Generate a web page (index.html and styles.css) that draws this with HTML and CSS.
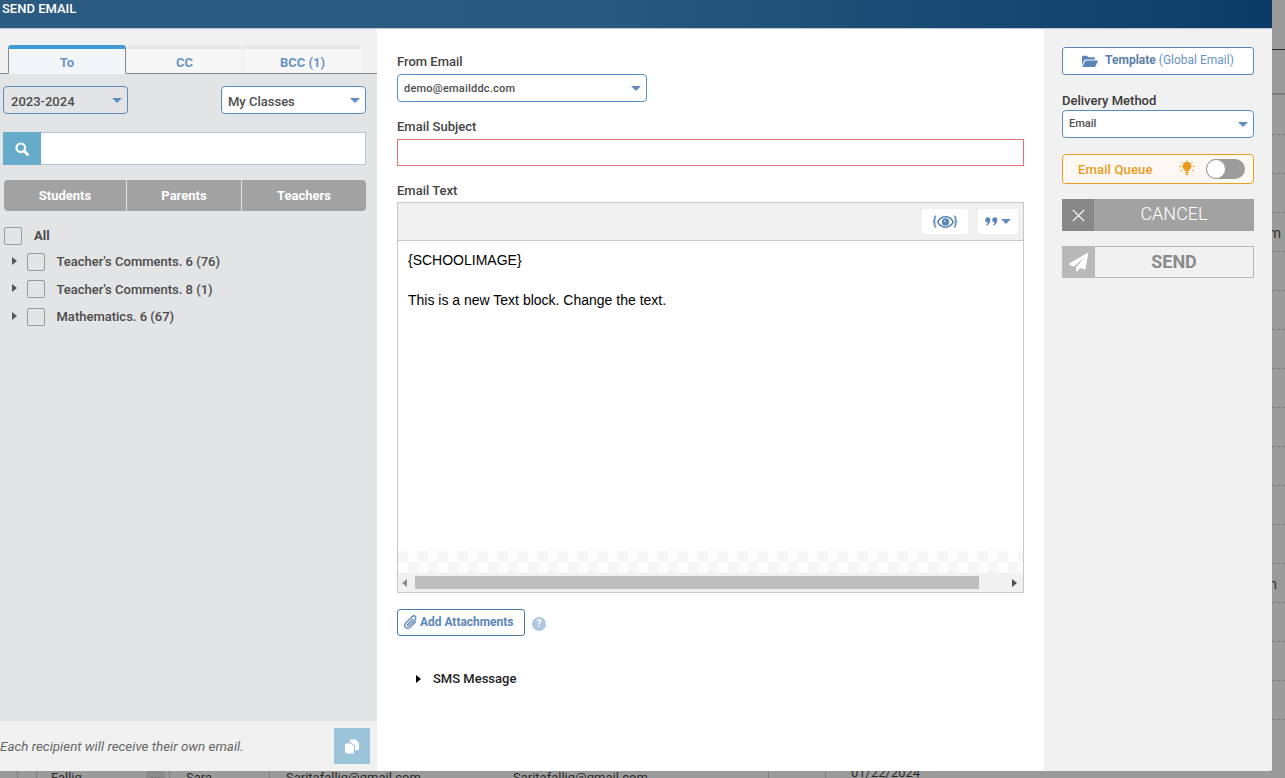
FILE: index.html
```html
<!DOCTYPE html>
<html lang="en">
<head>
<meta charset="utf-8">
<title>Send Email</title>
<link rel="stylesheet" href="styles.css">
</head>
<body>
<div class="backdrop">
  <div class="line-dark"></div>
  <div class="line-thick"></div>
  <div class="dash-list">
    <div class="dash"></div><div class="dash"></div><div class="dash dash-m"></div><div class="dash"></div><div class="dash"></div><div class="dash"></div><div class="dash"></div><div class="dash"></div><div class="dash"></div><div class="dash"></div><div class="dash"></div><div class="dash dash-n"></div><div class="dash"></div><div class="dash"></div><div class="dash"></div><div class="dash"></div>
  </div>
  <div class="back-row">
    <i class="vl vl1"></i><i class="vl vl2"></i><i class="vl vl3"></i><i class="vl vl4"></i><i class="vl vl5"></i><i class="vl vl6"></i>
    <span class="c1">Fallig</span><span class="dots">•••</span><span class="c2">Sara</span><span class="c3">Saritafallig@gmail.com</span><span class="c4">Saritafallig@gmail.com</span><span class="c5">01/22/2024</span>
  </div>
</div>
<div class="modal">
  <header class="modal-head">SEND EMAIL</header>
  <div class="modal-body">
    <aside class="left">
      <div class="tabs">
        <div class="tab tab-active">To</div>
        <div class="tab tab-cc">CC</div>
        <div class="tab tab-bcc">BCC (1)</div>
      </div>
      <div class="filters">
        <div class="select select-year">2023-2024<i class="caret"></i></div>
        <div class="select select-class">My Classes<i class="caret"></i></div>
      </div>
      <div class="search">
        <div class="search-icon"><svg width="14" height="14" viewBox="0 0 14 14"><circle cx="5.8" cy="5.8" r="4.3" fill="none" stroke="#fff" stroke-width="2.2"/><path d="M9 9l3.600 3.600" stroke="#fff" stroke-width="2.800" stroke-linecap="round"/></svg></div>
        <div class="search-field"></div>
      </div>
      <div class="seg">
        <div class="seg-btn seg-a">Students</div>
        <div class="seg-btn seg-b">Parents</div>
        <div class="seg-btn seg-c">Teachers</div>
      </div>
      <div class="tree">
        <div class="tree-all"><i class="check"></i><span class="all-label">All</span></div>
        <div class="tree-row row-1"><i class="arrow"></i><i class="check"></i><span class="row-label">Teacher's Comments. 6 (76)</span></div>
        <div class="tree-row row-2"><i class="arrow"></i><i class="check"></i><span class="row-label">Teacher's Comments. 8 (1)</span></div>
        <div class="tree-row row-3"><i class="arrow"></i><i class="check"></i><span class="row-label">Mathematics. 6 (67)</span></div>
      </div>
      <div class="left-foot">
        <span class="foot-text">Each recipient will receive their own email.</span>
        <div class="foot-btn"><svg width="16" height="15" viewBox="0 0 16 15"><path d="M7 .5h4.500l3.500 3.200V10a1.200 1.200 0 0 1-1.200 1.200H11V6.800L7.200 3.500H5.800V1.700A1.200 1.200 0 0 1 7 .5z" fill="#fff"/><path d="M2.500 4.500H7l3 2.800v6a1.200 1.200 0 0 1-1.200 1.200H3.500A2.500 2.500 0 0 1 1 12V6a1.500 1.500 0 0 1 1.500-1.500z" fill="#fff"/></svg></div>
      </div>
    </aside>
    <main class="center">
      <label class="label label-from">From Email</label>
      <div class="select select-from">demo@emailddc.com<i class="caret"></i></div>
      <label class="label label-subject">Email Subject</label>
      <div class="subject"></div>
      <label class="label label-text">Email Text</label>
      <div class="editor">
        <div class="toolbar">
          <div class="tool tool-eye"><span class="brace">{</span><svg width="17" height="12" viewBox="0 0 17 12"><path d="M.6 6C2.600 2.500 5.300.8 8.500.8s5.900 1.700 7.900 5.200c-2 3.500-4.700 5.200-7.900 5.200S2.600 9.500.6 6z" fill="none" stroke="#5b86b8" stroke-width="1.600"/><circle cx="8.500" cy="6" r="3.700" fill="#5b86b8"/><circle cx="7.700" cy="5.200" r=".9" fill="#cddcec"/></svg><span class="brace">}</span></div>
          <div class="tool tool-quote"><svg width="13" height="9" viewBox="0 0 13 9"><path d="M2.800.3a2.500 2.500 0 0 1 2.500 2.500c0 2.800-1.500 5-3.800 5.900L.9 7.800c1-.6 1.600-1.300 1.800-2.400A2.500 2.500 0 0 1 2.800.3zM9.800.3a2.500 2.500 0 0 1 2.500 2.500c0 2.800-1.500 5-3.800 5.900l-.6-.9c1-.6 1.600-1.300 1.800-2.400A2.500 2.500 0 0 1 9.800.3z" fill="#5b86b8"/></svg><i class="caret caret-small"></i></div>
        </div>
        <div class="editor-text">
          <p class="para">{SCHOOLIMAGE}</p>
          <p class="para">&nbsp;</p>
          <p class="para">This is a new Text block. Change the text.</p>
        </div>
        <div class="checker"></div>
        <div class="scrollbar">
          <i class="sb-left"></i>
          <div class="sb-thumb"></div>
          <i class="sb-right"></i>
        </div>
      </div>
      <div class="attach-row">
        <div class="attach"><svg width="13" height="15" viewBox="0 0 13 15"><path d="M11.500 6.800l-5 5.300c-1.500 1.500-3.700 1.600-4.900.4s-1.100-3.300.4-4.800L8 1.700c1-1 2.500-1.100 3.300-.3s.7 2.300-.3 3.300L5.300 10.600c-.5.500-1.200.6-1.600.2s-.3-1.100.2-1.600l4.800-5" fill="none" stroke="#5b86b8" stroke-width="1.300" stroke-linecap="round"/></svg><span class="attach-text">Add Attachments</span></div>
        <div class="help">?</div>
      </div>
      <div class="sms"><i class="arrow arrow-black"></i>SMS Message</div>
    </main>
    <aside class="right">
      <div class="template"><svg width="16" height="13" viewBox="0 0 16 13"><path d="M0 2a1.200 1.200 0 0 1 1.200-1.200h3.600l1.500 1.500h5.500A1.200 1.200 0 0 1 13 3.500V4.500H4a2 2 0 0 0-1.800 1.100L0 10z" fill="#5b86b8"/><path d="M4.200 5.500H15.300a.6.6 0 0 1 .5.900L13.300 11.400a1.200 1.200 0 0 1-1.100.7H1a.6.600 0 0 1-.5-.9L3.100 6.200a1.200 1.200 0 0 1 1.100-.7z" fill="#5b86b8"/></svg><b class="tpl-b">Template</b><span class="tpl-s">(Global Email)</span></div>
      <div class="delivery-label">Delivery Method</div>
      <div class="select select-delivery">Email<i class="caret"></i></div>
      <div class="queue">
        <span class="queue-label">Email Queue</span>
        <svg class="bulb" width="16" height="16" viewBox="0 0 16 16"><path d="M8 1.800a4.400 4.400 0 0 0-2.800 7.800c.5.500.8 1 .9 1.600h3.800c.1-.6.400-1.100.9-1.600A4.400 4.400 0 0 0 8 1.800z" fill="#eb9a1a"/><path d="M6.200 12h3.600v1.200H6.200zM6.700 13.800h2.600V15H6.700z" fill="#eb9a1a"/><path d="M8 0v1.200M2.500 1.800l1.200 1.200M13.500 1.800L12.300 3M.2 6.500H2.200M13.800 6.500h2M1.500 11l1.800-1M14.500 11l-1.800-1" stroke="#eb9a1a" stroke-width="1"/></svg>
        <div class="toggle"><i class="knob"></i></div>
      </div>
      <div class="cancel">
        <div class="cancel-x"><svg width="13" height="13" viewBox="0 0 13 13"><path d="M.8.800l11.400 11.400M12.200.8L.8 12.200" stroke="#fff" stroke-width="1.200"/></svg></div>
        <div class="cancel-text">CANCEL</div>
      </div>
      <div class="send">
        <div class="send-icon"><svg width="20" height="20" viewBox="0 0 20 20"><path d="M19.500.3L.6 11.200c-.7.4-.6 1.400.1 1.700l4.300 1.800L16 4.500 7 15.600v3.100c0 .8 1 1.100 1.500.5l2.700-3.200 3.900 1.600c.6.300 1.300-.1 1.400-.8z" fill="#fff"/></svg></div>
        <div class="send-text">SEND</div>
      </div>
    </aside>
  </div>
</div>
</body>
</html>
```
FILE: styles.css
```css
* { box-sizing: border-box; }
html, body { margin: 0; height: 100%; overflow: hidden; }
body { font-family: Roboto, "Liberation Sans", sans-serif; color: #444; background: #9a9a9a; width: 1285px; height: 778px; position: relative; }
i { display: block; font-style: normal; }

/* page behind the dialog */
.backdrop { width: 1285px; height: 778px; background: #9a9a9a; position: relative; overflow: hidden; }
.line-dark { position: absolute; top: 49px; left: 0; right: 0; height: 1px; background: #2f2f2f; }
.line-thick { position: absolute; top: 93px; left: 0; right: 0; height: 2px; background: #7e7e7e; }
.dash-list { position: absolute; top: 134px; left: 0; right: 0; }
.dash { height: 39px; border-top: 1px dashed #7c7c7c; position: relative; }
.dash-m::after { content: "m"; position: absolute; right: 4px; top: 12px; color: #333; font-size: 14px; }
.dash-n::after { content: "n"; position: absolute; right: 8px; top: 12px; color: #333; font-size: 14px; }
.back-row { position: absolute; left: 0; top: 771px; height: 7px; width: 1285px; font-size: 13px; color: #2b2b2b; line-height: 14px; overflow: hidden; }
.back-row span { position: absolute; top: 0; }
.vl { position: absolute; top: 0; height: 7px; width: 1px; background: #7c7c7c; }
.vl1 { left: 17px; } .vl2 { left: 36px; } .vl3 { left: 169px; } .vl4 { left: 269px; } .vl5 { left: 768px; } .vl6 { left: 825px; }
.c1 { left: 51px; } .dots { left: 146px; width: 19px; background: #8a8a8a; color: #666; font-size: 9px; text-align: center; border-radius: 3px 3px 0 0; }
.c2 { left: 186px; } .c3 { left: 286px; } .c4 { left: 513px; } .back-row .c5 { left: 851px; top: -5px; }

/* dialog */
.modal { position: absolute; left: 0; top: 0; width: 1272px; height: 771px; display: flex; flex-direction: column; background: #fff; border-bottom-right-radius: 3px; overflow: hidden; }
.modal-head { height: 29px; flex: none; padding: 1px 0 0 2px; font-size: 13px; font-weight: 500; line-height: 15px; color: #fff; background: linear-gradient(90deg, #2c5b81 0%, #2a5a80 45%, #0c3b67 100%); border-bottom: 1px solid #b9c9da; }
.modal-body { flex: 1; display: flex; min-height: 0; }

/* left */
.left { width: 377px; flex: none; background: #e3e4e6; display: flex; flex-direction: column; }
.tabs { height: 45px; flex: none; background: #f1f1f1; padding: 16px 0 0 8px; display: flex; align-items: flex-end; border-bottom: 1px solid #858585; }
.tab { height: 28px; font-size: 13px; font-weight: 700; color: #6a94c4; text-align: center; line-height: 27px; background: #f7f7f7; border-top: 4px solid #e6e6e6; border-radius: 3px 3px 0 0; }
.tab-active { width: 118px; background: #f3f6f9; border: 1px solid #8a8a8a; border-top: 4px solid #3f9bd5; border-bottom: 1px solid #f3f6f9; margin-bottom: -1px; height: 29px; }
.tab-cc { width: 115px; margin-left: 1px; }
.tab-bcc { width: 117px; margin-left: 2px; }

.filters { display: flex; justify-content: space-between; margin: 12px 11px 0 3px; }
.select { position: relative; height: 28px; border: 1px solid #5b8cbf; border-radius: 4px; font-size: 13px; font-weight: 500; line-height: 27px; color: #4d4d4d; padding-left: 7px; background: #fff; }
.caret { position: absolute; right: 5px; top: 11px; width: 0; height: 0; border-left: 5px solid transparent; border-right: 5px solid transparent; border-top: 5px solid #5f8dc0; }
.select-year { width: 125px; background: transparent; line-height: 29px; }
.select-class { width: 145px; padding-left: 6px; line-height: 29px; }

.search { display: flex; height: 33px; margin: 18px 11px 0 3px; }
.search-icon { width: 38px; background: #66abc9; display: flex; align-items: center; justify-content: center; }
.search-field { flex: 1; background: #fff; border: 1px solid #b0c7dc; border-left: 0; }

.seg { display: flex; height: 31px; margin: 15px 11px 0 4px; border-radius: 4px; overflow: hidden; gap: 1px; background: #e3e4e6; }
.seg-btn { background: #a2a2a2; color: #fff; font-size: 13px; font-weight: 700; text-align: center; line-height: 31px; }
.seg-a { width: 122px; } .seg-b { width: 114px; } .seg-c { flex: 1; }

.tree { flex: 1; padding-top: 16px; }
.check { width: 18px; height: 18px; border: 1px solid #999; border-radius: 2px; flex: none; }
.tree-all { display: flex; align-items: center; padding-left: 4px; height: 18px; }
.all-label { margin-left: 12px; padding-bottom: 2px; font-size: 13px; font-weight: 700; color: #4a4a4a; }
.tree-row { display: flex; align-items: center; height: 18px; padding-left: 12px; }
.row-1 { margin-top: 8px; } .row-2 { margin-top: 9px; } .row-3 { margin-top: 10px; }
.arrow { width: 0; height: 0; border-top: 4.500px solid transparent; border-bottom: 4.500px solid transparent; border-left: 5px solid #555; margin-top: -2px; }
.tree-row .check { margin-left: 10px; }
.row-label { margin-left: 11.500px; padding-bottom: 2px; font-size: 13px; font-weight: 500; color: #4a4a4a; }
.row-2 .row-label { padding-bottom: 0; }

.left-foot { height: 50px; flex: none; background: #f1f1f1; display: flex; align-items: center; justify-content: space-between; padding: 0 7px 0 0; }
.foot-text { font-size: 13.400px; font-style: italic; color: #666; }
.foot-btn { width: 36px; height: 36px; background: #9cc4da; display: flex; align-items: center; justify-content: center; }

/* centre */
.center { flex: 1; background: #fff; padding: 0 20px; display: flex; flex-direction: column; align-items: flex-start; }
.label { font-size: 13px; font-weight: 500; color: #444; line-height: 15px; }
.label-from { margin-top: 25px; }
.select-from { width: 250px; margin-top: 5px; font-size: 11px; letter-spacing: .22px; padding-left: 6px; }
.label-subject { margin-top: 17px; }
.subject { width: 627px; height: 27px; margin-top: 5px; border: 1px solid #e57373; }
.label-text { margin-top: 17px; }
.editor { width: 627px; height: 391px; margin-top: 4px; border: 1px solid #c8c8c8; display: flex; flex-direction: column; }
.toolbar { height: 38px; flex: none; background: #f0f0f0; border-bottom: 1px solid #c8c8c8; display: flex; justify-content: flex-end; gap: 10px; padding: 6px 5px 0 0; }
.tool { height: 25px; background: #fff; border-radius: 2px; display: flex; align-items: center; justify-content: center; color: #5b86b8; }
.tool-eye { width: 46px; }
.tool-quote { width: 40px; gap: 1px; position: relative; }
.brace { font-size: 12px; font-weight: 700; line-height: 13px; }
.caret-small { position: static; margin-left: 2px; }
.editor-text { flex: 1; padding: 9px 10px; font-family: "Liberation Sans", Arial, sans-serif; font-size: 14px; color: #000; }
.para { margin: 0; line-height: 20px; }
.checker { height: 22px; flex: none; background: conic-gradient(#f6f6f6 25%, #fdfdfd 0 50%, #f6f6f6 0 75%, #fdfdfd 0) -10px 0 / 20px 22px; }
.scrollbar { height: 19px; flex: none; background: #f1f1f1; display: flex; align-items: center; position: relative; padding: 0 4px; }
.sb-thumb { position: absolute; left: 17px; width: 564px; top: 3px; height: 13px; background: #bebebe; }
.sb-left { width: 0; height: 0; border-top: 4px solid transparent; border-bottom: 4px solid transparent; border-right: 5px solid #8c8c8c; }
.sb-right { margin-left: auto; width: 0; height: 0; border-top: 4px solid transparent; border-bottom: 4px solid transparent; border-left: 5px solid #505050; margin-right: 2px; }

.attach-row { display: flex; align-items: center; margin-top: 16px; }
.attach { width: 128px; height: 27px; border: 1px solid #4d7ba8; border-radius: 3px; display: flex; align-items: center; padding-left: 6px; gap: 3px; font-size: 12px; font-weight: 700; color: #5b86b8; }
.attach-text { padding-bottom: 2px; letter-spacing: -.03px; }
.help { width: 14px; height: 14px; margin: 2px 0 0 7px; border-radius: 50%; background: #b0c7e0; color: #fff; font-size: 10px; font-weight: 700; text-align: center; line-height: 14px; }
.sms { display: flex; align-items: center; margin: 35px 0 0 19px; font-size: 13px; font-weight: 500; color: #222; gap: 12px; line-height: 15px; }
.arrow-black { border-left-color: #000; margin-top: 0; }

/* right */
.right { width: 228px; flex: none; background: #f1f1f1; padding: 18px 18px 0; display: flex; flex-direction: column; }
.template { height: 28px; padding-bottom: 2px; background: #fff; border: 1px solid #5b86b8; border-radius: 3px; display: flex; align-items: center; justify-content: center; font-size: 12px; color: #6a94c4; }
.template svg { margin-right: 7px; margin-top: 2px; }
.tpl-b { font-weight: 700; color: #5b80aa; margin-right: 3px; }
.tpl-s { font-weight: 400; }
.delivery-label { margin-top: 19px; font-size: 13px; font-weight: 500; color: #3a3a3a; line-height: 14px; }
.select-delivery { margin-top: 2px; height: 28px; font-size: 11px; padding-left: 6px; line-height: 26px; }
.queue { position: relative; height: 30px; margin-top: 16px; border: 1px solid #eb9f20; border-radius: 4px; background: #fdf8f3; display: flex; align-items: center; }
.queue-label { margin-left: 15px; font-size: 13px; font-weight: 500; letter-spacing: .15px; color: #eb9a1a; }
.bulb { margin-left: 26px; margin-top: -3px; }
.toggle { width: 39px; height: 20px; border-radius: 10px; background: #9c9c9c; margin-left: 11px; position: relative; }
.knob { position: absolute; left: 0; top: 0; width: 20px; height: 20px; border-radius: 50%; background: #fff; border: 1px solid #9c9c9c; }
.cancel { display: flex; height: 32px; margin-top: 15px; background: #a2a2a2; }
.cancel-x { width: 32px; background: #888; display: flex; align-items: center; justify-content: center; }
.cancel-text { flex: 1; text-align: center; color: #fff; font-size: 18px; font-weight: 300; line-height: 30px; }
.send { display: flex; height: 32px; margin-top: 15px; border: 1px solid #b9b9b9; }
.send-icon { width: 32px; background: #b9b9b9; display: flex; align-items: center; justify-content: center; }
.send-text { flex: 1; text-align: center; color: #8a8a8a; font-size: 18px; font-weight: 700; line-height: 29px; }
```
